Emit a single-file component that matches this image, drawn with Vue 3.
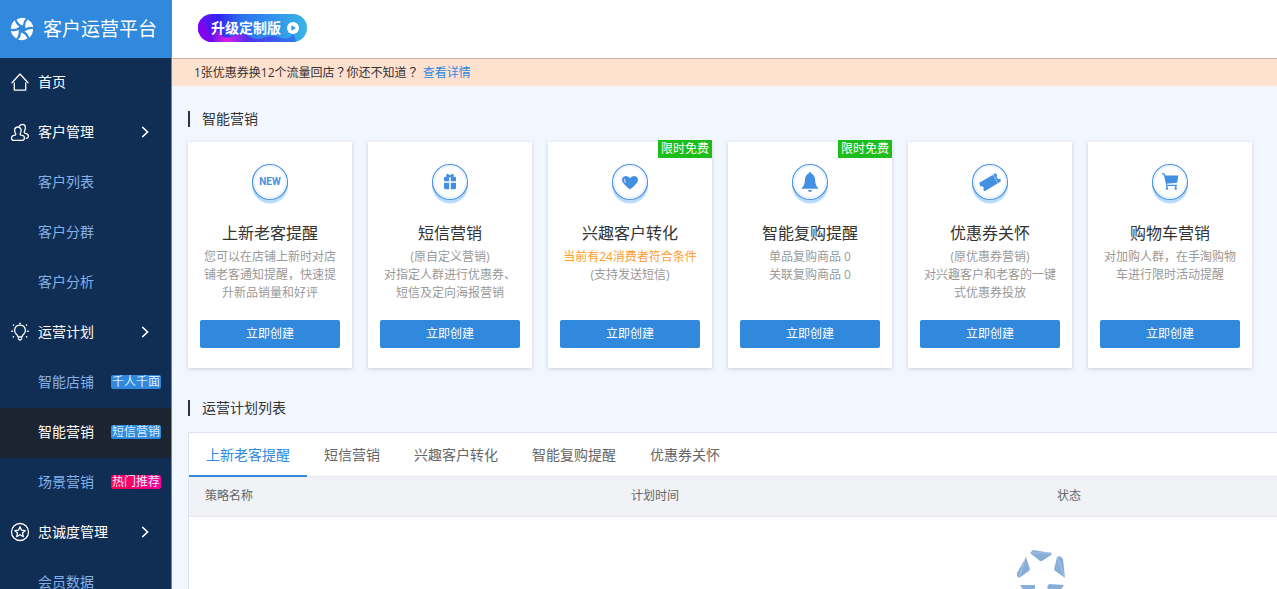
<script setup>
const menu = [
  { text: '首页', icon: 'home' },
  { text: '客户管理', icon: 'users', arrow: true },
  { text: '客户列表' },
  { text: '客户分群' },
  { text: '客户分析' },
  { text: '运营计划', icon: 'bulb', arrow: true },
  { text: '智能店铺', tag: '千人千面' },
  { text: '智能营销', tag: '短信营销', active: true },
  { text: '场景营销', tag: '热门推荐', hot: true },
  { text: '忠诚度管理', icon: 'star', arrow: true },
  { text: '会员数据' }
]

const cards = [
  { icon: 'new', title: '上新老客提醒', lines: ['您可以在店铺上新时对店铺老客通知提醒，快速提升新品销量和好评'] },
  { icon: 'gift', title: '短信营销', lines: ['(原自定义营销)', '对指定人群进行优惠券、短信及定向海报营销'] },
  { icon: 'heart', title: '兴趣客户转化', free: true, notice: '当前有24消费者符合条件', lines: ['(支持发送短信)'] },
  { icon: 'bell', title: '智能复购提醒', free: true, lines: ['单品复购商品 0', '关联复购商品 0'] },
  { icon: 'ticket', title: '优惠券关怀', lines: ['(原优惠券营销)', '对兴趣客户和老客的一键式优惠券投放'] },
  { icon: 'cart', title: '购物车营销', lines: ['对加购人群，在手淘购物车进行限时活动提醒'] }
]

const tabs = ['上新老客提醒', '短信营销', '兴趣客户转化', '智能复购提醒', '优惠券关怀']
const blades = [0, 60, 120, 180, 240, 300]
</script>

<template>
  <div class="app">
    <aside class="sidebar">
      <div class="brand">
        <svg class="brand-logo" viewBox="0 0 24 24" aria-hidden="true">
          <path v-for="a in blades" :key="a" :transform="`rotate(${a} 12 12)`" d="M6.6 2.4Q11 -.4 16 1.4Q12.6 4.4 13 8.6Q8.2 7 6.6 2.4Z" fill="#fff" />
        </svg>
        <span>客户运营平台</span>
      </div>
      <nav>
        <a v-for="m in menu" :key="m.text" href="#" class="item" :class="{ parent: m.icon, active: m.active }">
          <span class="item-icon">
            <svg v-if="m.icon" viewBox="0 0 20 20" aria-hidden="true">
              <g fill="none" stroke="#fff" stroke-width="1.3" stroke-linejoin="round" stroke-linecap="round">
                <template v-if="m.icon === 'home'">
                  <path d="M2 10.8L10 2L18 10.8" />
                  <path d="M4.3 10.8V18.2H15.7V10.8" />
                </template>
                <template v-else-if="m.icon === 'users'">
                  <path d="M5.2 13.2Q6.4 12.6 5.2 10.8Q4.3 8.9 4.7 7.3Q5.4 5 7.8 5T11 7.5Q11.5 9.3 10.5 11Q9.5 12.7 10.8 13.2Q14.6 13.5 14.4 16Q14.2 18.3 12.4 18.3H3.5Q1.5 18.3 1.5 16Q1.6 13.4 5.2 13.2Z" />
                  <path d="M9.3 4.2Q10.3 2.3 12.5 2.3Q15 2.4 15.4 5Q15.6 7 14.6 8.8Q13.7 10.8 15.2 11.3Q18.6 11.8 18.5 14.3Q18.3 16.3 16.3 16.4" />
                </template>
                <template v-else-if="m.icon === 'bulb'">
                  <path d="M8 15Q7.8 13.3 6.2 12Q4.3 10.2 4.6 7.8Q5.4 3.2 10 3.2T15.4 7.8Q15.7 10.2 13.8 12Q12.2 13.3 12 15ZM8.4 16.8Q10 19.2 11.6 16.8" />
                  <path d="M9.6 1.3H10.4M3.8 3.2L3.4 2.9M16.2 3.2L16.6 2.9M1.6 9.2H2.6M17.4 9.2H18.4M3.6 14.6L3.2 15M16.4 14.6L16.8 15" />
                </template>
                <template v-else>
                  <circle cx="10" cy="10" r="8.5" />
                  <path d="M10 4.8L11.5 8.2L15.2 8.6L12.5 11L13.3 14.6L10 12.8L6.7 14.6L7.5 11L4.8 8.6L8.5 8.2Z" />
                </template>
              </g>
            </svg>
          </span>
          <span class="item-text">{{ m.text }}</span>
          <span v-if="m.tag" class="tag" :class="{ hot: m.hot }">{{ m.tag }}</span>
          <svg v-if="m.arrow" class="chevron" viewBox="0 0 8 12" aria-hidden="true">
            <path d="M1.3 1L6.5 6L1.3 11" fill="none" stroke="#fff" stroke-width="1.7" />
          </svg>
        </a>
      </nav>
    </aside>

    <div class="content">
      <header class="topbar">
        <button type="button" class="upgrade">
          <svg class="upgrade-bg" viewBox="0 0 109 28" preserveAspectRatio="none" aria-hidden="true">
            <defs>
              <linearGradient id="base" x1="0" x2="1"><stop offset="0" stop-color="#7012f4" /><stop offset=".18" stop-color="#3420f5" /><stop offset=".4" stop-color="#2b72ee" /><stop offset="1" stop-color="#38b5e6" /></linearGradient>
              <linearGradient id="wave" x1="0" x2="1"><stop offset="0" stop-color="#3a16ef" /><stop offset=".22" stop-color="#e01ce6" /><stop offset=".45" stop-color="#5030ee" /><stop offset="1" stop-color="#2b7cec" /></linearGradient>
            </defs>
            <rect width="109" height="28" fill="url(#base)" />
            <path d="M0 3Q8 8 10 17Q12 23 20 28H0Z" fill="#7d05ee" />
            <path d="M9 12Q14 8 19 16Q25 26 33 23Q41 18 49 21Q57 27 65 24Q74 20 83 24Q92 26 95 20Q98 24 98 28H16Z" fill="url(#wave)" />
          </svg>
          <span class="upgrade-text">升级定制版</span>
          <svg class="play" viewBox="0 0 12 12" aria-hidden="true">
            <circle cx="6" cy="6" r="6" fill="#fff" /><path d="M4.4 3.2L8.8 6L4.4 8.8Z" fill="#2f91e9" />
          </svg>
        </button>
      </header>

      <div class="notice">
        <p>1张优惠券换12个流量回店<span class="mark">？</span>你还不知道<span class="mark">？</span></p>
        <a href="#">查看详情</a>
      </div>

      <main>
        <h2>智能营销</h2>
        <section class="cards">
          <article v-for="c in cards" :key="c.title" class="card">
            <span v-if="c.free" class="free">限时免费</span>
            <svg class="card-icon" viewBox="0 0 40 42" aria-hidden="true">
              <circle cx="20" cy="23.5" r="18" fill="#b9dcfc" />
              <circle cx="20" cy="20" r="17.5" fill="#fff" stroke="#4a92e3" stroke-width="1.2" />
              <circle cx="20" cy="20" r="15.8" fill="none" stroke="#eaf3fd" stroke-width="1.6" />
              <g fill="#4390e2">
                <text v-if="c.icon === 'new'" x="20" y="23" text-anchor="middle" class="new">NEW</text>
                <template v-else-if="c.icon === 'gift'">
                  <path d="M14 15.7Q14 14.7 15 14.7H16.6Q15.5 12.4 17.2 12Q18.9 11.6 20 13.6Q21.1 11.6 22.8 12Q24.5 12.4 23.4 14.7H25Q26 14.7 26 15.7V19.2H20.8V15.3H19.2V19.2H14ZM14 20.7H19.2V27.3H15.5Q14 27.3 14 25.8ZM20.8 20.7H26V25.8Q26 27.3 24.5 27.3H20.8Z" />
                </template>
                <template v-else-if="c.icon === 'heart'">
                  <path d="M20 27.3Q18.8 27.2 13.8 21.8Q11 18.5 12.5 15.8Q15.5 12.2 20 15.9Q24.5 12.2 27.5 15.8Q29 18.5 26.2 21.8Q21.2 27.2 20 27.3Z" />
                  <path d="M14.7 17Q14 19.2 15.6 21" fill="none" stroke="#e7f2fd" stroke-width=".9" />
                </template>
                <template v-else-if="c.icon === 'bell'">
                  <path d="M18.5 11.8Q18.5 10 20 10T21.5 11.8Q24.8 13 25.1 18.2Q25.4 23.5 28.2 26V26.7H11.8V26Q14.6 23.5 14.9 18.2Q15.2 13 18.5 11.8ZM17.8 28H22.2Q21.5 29.9 20 29.9T17.8 28Z" />
                </template>
                <template v-else-if="c.icon === 'ticket'">
                  <path d="M9.3 20.8L23.6 12.4L24.1 11.5L26.2 11.8L27 13.2Q26 15.8 28.6 17.1L30.3 16.8L30.8 19.5L16.4 28.2L14.5 29.3L13.3 28.1Q14.5 25.3 12.2 24.3L10.2 24.2Z" />
                  <path d="M23.3 13L27.6 20.6" fill="none" stroke="#fff" stroke-width=".8" stroke-dasharray="1.6 1" />
                </template>
                <template v-else>
                  <path d="M12 11L14.7 11.6L15.4 13.4H28.3L27.2 20.8L16.8 21.8L17 22.8H27V24H26.4V25.4H25V24H17.7V25.4H16.3V23.8L13.8 12.7L12 12.3Z" />
                  <circle cx="17" cy="26.5" r="1.2" /><circle cx="25.7" cy="26.5" r="1.2" />
                </template>
              </g>
            </svg>
            <h3>{{ c.title }}</h3>
            <div class="desc">
              <p v-if="c.notice" class="highlight">{{ c.notice }}</p>
              <p v-for="l in c.lines" :key="l">{{ l }}</p>
            </div>
            <button type="button" class="create">立即创建</button>
          </article>
        </section>

        <h2>运营计划列表</h2>
        <section class="panel">
          <div class="tabs" role="tablist">
            <button v-for="(t, i) in tabs" :key="t" type="button" role="tab" :aria-selected="i === 0" class="tab" :class="{ on: i === 0 }">{{ t }}</button>
          </div>
          <table>
            <thead>
              <tr><th>策略名称</th><th>计划时间</th><th>状态</th><th></th></tr>
            </thead>
            <tbody>
              <tr>
                <td colspan="4">
                  <svg class="empty" viewBox="0 0 50 50" aria-hidden="true">
                    <g fill="#88aed8">
                      <path d="M14 4L17 1L36 4L35 6L26 12L24 12Z" />
                      <path d="M10 8L14 20L13 22L3 29L1 27L1 24Z" />
                      <path d="M41 8L44 7L47 10L49 29L38 21Z" />
                      <path d="M4 36L19 36L19 39L15 49L11 47Z" />
                      <path d="M33 35L48 36L41 46L37 49L31 38Z" />
                    </g>
                    <path d="M14 4H36M10 8L3 28M41 8L49 29" stroke="#b7cfea" stroke-width=".7" />
                  </svg>
                </td>
              </tr>
            </tbody>
          </table>
        </section>
      </main>
    </div>
  </div>
</template>

<style>
body {
  background: #f2f7ff;
}
</style>

<style scoped>
* {
  box-sizing: border-box;
}
.app {
  display: flex;
  height: 100vh;
  overflow: hidden;
  background: #f2f7ff;
  color: #333;
  font: 12px/18px "Open Sans", "Noto Sans CJK SC", sans-serif;
}
a {
  text-decoration: none;
}
button {
  padding: 0;
  border: 0;
  background: none;
  font: inherit;
  cursor: pointer;
}
h2, h3, p {
  margin: 0;
  font-weight: 400;
}
.mark {
  font-family: "Noto Sans CJK TC", sans-serif;
}
.sidebar {
  flex: 0 0 172px;
  overflow: hidden;
  background: #102e54;
  border-right: 1px solid #6f83a5;
}
.brand {
  display: flex;
  align-items: center;
  gap: 9px;
  height: 58px;
  margin-right: -1px;
  padding-left: 10px;
  background: #3089dc;
  color: #fff;
  font-size: 19px;
  line-height: 28px;
  white-space: nowrap;
}
.brand-logo {
  width: 24px;
  height: 24px;
}
.item {
  display: flex;
  align-items: center;
  height: 50px;
  padding: 0 10px 2px;
  color: #84b1e8;
  font-size: 14px;
  line-height: 20px;
}
.item.parent, .item.active {
  color: #fff;
}
.item.active {
  background: #1c2431;
}
.item-icon {
  width: 20px;
  height: 20px;
  margin-right: 8px;
}
.item-icon svg {
  display: block;
}
.item-text {
  flex: 1;
}
.tag {
  padding: 0 1px;
  border-radius: 2px;
  background: #3089dc;
  color: #d9ecff;
  font-size: 12px;
  line-height: 14px;
}
.tag.hot {
  background: linear-gradient(90deg, #ff0045, #f5009e);
}
.chevron {
  width: 8px;
  height: 12px;
  margin-right: 12px;
}
.content {
  flex: 1;
  min-width: 0;
  overflow: hidden;
}
.topbar {
  display: flex;
  align-items: center;
  height: 58px;
  padding: 0 26px;
  background: #fff;
}
.upgrade {
  position: relative;
  display: flex;
  align-items: center;
  gap: 6px;
  height: 28px;
  margin-bottom: 2px;
  padding: 0 8px 0 13px;
  overflow: hidden;
  border-radius: 14px;
  color: #fff;
  font-size: 14px;
  font-weight: 700;
}
.upgrade-bg {
  position: absolute;
  inset: 0;
  width: 100%;
  height: 100%;
}
.upgrade-text {
  position: relative;
}
.play {
  position: relative;
  width: 12px;
  height: 12px;
}
.notice {
  display: flex;
  align-items: center;
  gap: 4px;
  height: 28px;
  padding: 0 22px;
  border-top: 1px solid #cbb0a4;
  background: #ffe1d0;
}
.notice a {
  color: #3089dc;
}
main {
  padding: 25px 16px 0;
}
h2 {
  display: flex;
  align-items: center;
  gap: 12px;
  height: 16px;
  font-size: 14px;
  line-height: 16px;
}
h2::before {
  content: "";
  width: 2px;
  height: 16px;
  background: #333;
}
.cards {
  display: flex;
  gap: 16px;
  margin: 15px 0 32px;
}
.card {
  position: relative;
  display: flex;
  flex: 0 0 164px;
  flex-direction: column;
  align-items: center;
  padding: 20px 12px;
  background: #fff;
  box-shadow: 0 1px 4px #c6ccd8;
}
.free {
  position: absolute;
  top: -2px;
  right: 0;
  padding: 0 3px;
  background: #1bbe1b;
  color: #fff;
}
.card-icon {
  width: 40px;
  height: 42px;
}
.new {
  font: 700 10px Roboto, "Liberation Sans", sans-serif;
}
h3 {
  margin-top: 17px;
  font-size: 16px;
  line-height: 24px;
}
.desc {
  height: 72px;
  padding: 3px 3px 0;
  margin-bottom: 3px;
  color: #999;
  text-align: center;
}
.desc .highlight {
  margin: 0 -3px;
  color: #ff9c2d;
  white-space: nowrap;
}
.create {
  align-self: stretch;
  height: 28px;
  border-radius: 2px;
  background: #3089dc;
  color: #fff;
}
.panel {
  min-width: 1706px;
  margin-top: 16px;
  border: 1px solid #dce4ef;
  background: #fff;
}
.tabs {
  display: flex;
  height: 44px;
  border-bottom: 1px solid #e4e6ea;
}
.tab {
  height: 44px;
  padding: 2px 17px 0;
  border-bottom: 2px solid transparent;
  color: #666;
  font-size: 14px;
}
.tab.on {
  border-color: #3089dc;
  color: #3089dc;
}
table {
  width: 100%;
  table-layout: fixed;
  border-collapse: collapse;
}
th {
  height: 39px;
  padding: 0 16px;
  border-bottom: 1px solid #e4e6ea;
  background: #f0f2f6;
  color: #666;
  font-weight: 400;
  text-align: left;
}
td {
  padding: 32px 0;
  text-align: center;
}
.empty {
  width: 50px;
  height: 50px;
}
</style>
